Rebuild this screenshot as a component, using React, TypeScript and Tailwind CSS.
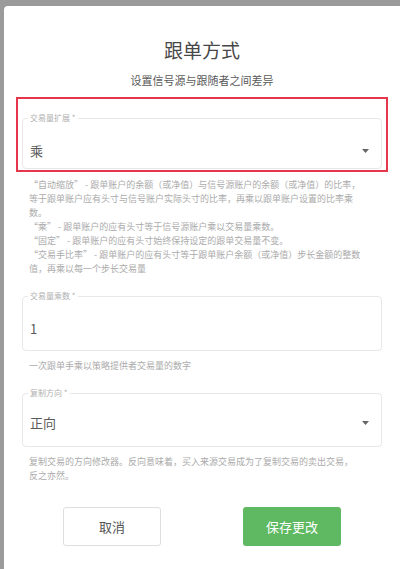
import React from "react";

const FONT = { fontFamily: '"Noto Sans CJK SC", "Noto Sans", sans-serif' };

function Arrow() {
  return (
    <svg width="7" height="4" viewBox="0 0 7 4" className="mr-[12px]">
      <path d="M0 0 L7 0 L3.5 4 Z" fill="#666" />
    </svg>
  );
}

export default function App() {
  return (
    <div className="w-[400px] h-[569px] bg-[#9b9b9b] pt-[6px] pl-[4px] overflow-hidden" style={FONT}>
      <div className="bg-white h-full rounded-tl-[4px] flex flex-col">
        <div className="pt-[31px] text-center text-[19px] leading-[26px] text-[#474747]">跟单方式</div>
        <div className="mt-[9px] text-center text-[11px] leading-[16px] text-[#5a5a5a]">设置信号源与跟随者之间差异</div>

        <div className="mt-[9px] ml-[12px] mr-[12px] border-2 border-[#e5364d] pt-[14px] pb-[1px] px-[4px]">
          <fieldset className="border border-[#e8e8e8] rounded-[4px] pl-[5px] pt-[18px] pb-[7px]">
            <legend className="px-[2px] text-[8px] leading-[10px] text-[#b0b0b0]">交易量扩展 *</legend>
            <div className="flex items-center justify-between h-[20px]">
              <span className="ml-[2px] text-[13px] leading-[20px] text-[#5a5a5a]">乘</span>
              <Arrow />
            </div>
          </fieldset>
        </div>

        <div className="mt-[6px] pl-[25px] text-[9px] leading-[14px] text-[#ababab] whitespace-nowrap">
          <div>“自动缩放” - 跟单账户的余额（或净值）与信号源账户的余额（或净值）的比率，</div>
          <div>等于跟单账户应有头寸与信号账户实际头寸的比率，再乘以跟单账户设置的比率乘</div>
          <div>数。</div>
          <div>“乘” - 跟单账户的应有头寸等于信号源账户乘以交易量乘数。</div>
          <div>“固定” - 跟单账户的应有头寸始终保持设定的跟单交易量不变。</div>
          <div>“交易手比率” - 跟单账户的应有头寸等于跟单账户余额（或净值）步长金额的整数</div>
          <div>值，再乘以每一个步长交易量</div>
        </div>

        <fieldset className="mt-[15px] mx-[18px] border border-[#e8e8e8] rounded-[4px] pl-[5px] pt-[18px] pb-[11px]">
          <legend className="px-[2px] text-[8px] leading-[10px] text-[#b0b0b0]">交易量乘数 *</legend>
          <div className="flex items-center h-[20px]">
            <span className="ml-[2px] text-[13px] leading-[20px] text-[#5a5a5a]">1</span>
          </div>
        </fieldset>

        <div className="mt-[8px] pl-[25px] text-[9px] leading-[14px] text-[#ababab] whitespace-nowrap">
          一次跟单手乘以策略提供者交易量的数字
        </div>

        <fieldset className="mt-[15px] mx-[18px] border border-[#e8e8e8] rounded-[4px] pl-[5px] pt-[15px] pb-[13px]">
          <legend className="px-[2px] text-[8px] leading-[10px] text-[#b0b0b0]">复制方向 *</legend>
          <div className="flex items-center justify-between h-[20px]">
            <span className="ml-[2px] text-[13px] leading-[20px] text-[#5a5a5a]">正向</span>
            <Arrow />
          </div>
        </fieldset>

        <div className="mt-[8px] pl-[25px] text-[9px] leading-[14px] text-[#ababab] whitespace-nowrap">
          <div>复制交易的方向修改器。反向意味着，买入来源交易成为了复制交易的卖出交易，</div>
          <div>反之亦然。</div>
        </div>

        <div className="mt-[24px] flex justify-center gap-[82px]">
          <button className="w-[98px] h-[39px] border border-[#dedede] rounded-[3px] bg-white text-[13px] text-[#555]">取消</button>
          <button className="w-[98px] h-[39px] rounded-[3px] bg-[#5eb962] text-[13px] text-white">保存更改</button>
        </div>
      </div>
    </div>
  );
}
